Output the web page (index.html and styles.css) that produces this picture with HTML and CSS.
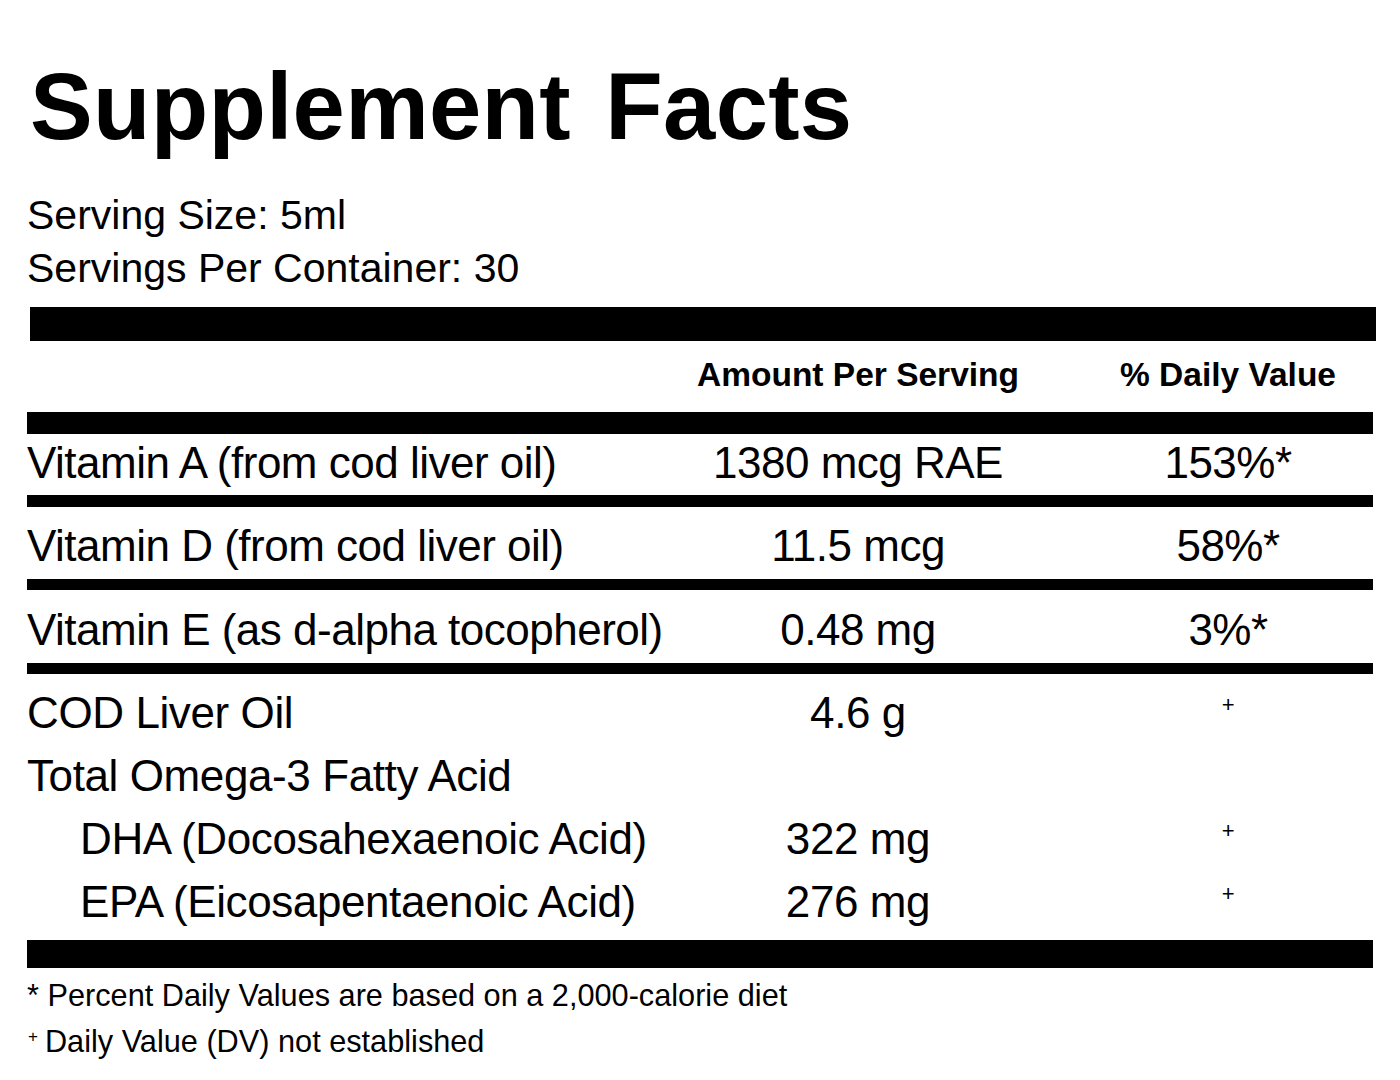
FILE: index.html
```html
<!DOCTYPE html>
<html lang="en">
<head>
<meta charset="utf-8">
<title>Supplement Facts</title>
<link rel="stylesheet" href="styles.css">
</head>
<body>
<main class="label">
  <h1 class="title">Supplement Facts</h1>
  <div class="serving">
    <div>Serving Size: 5ml</div>
    <div>Servings Per Container: 30</div>
  </div>
  <div class="bar bar-top"></div>
  <div class="row head">
    <span class="name"></span>
    <span class="amt">Amount Per Serving</span>
    <span class="dv">% Daily Value</span>
  </div>
  <div class="bar bar-med"></div>
  <div class="row vit vit-a">
    <span class="name">Vitamin A (from cod liver oil)</span>
    <span class="amt">1380 mcg RAE</span>
    <span class="dv">153%*</span>
  </div>
  <div class="bar bar-thin bar-12"></div>
  <div class="row vit vit-d">
    <span class="name">Vitamin D (from cod liver oil)</span>
    <span class="amt">11.5 mcg</span>
    <span class="dv">58%*</span>
  </div>
  <div class="bar bar-thin"></div>
  <div class="row vit vit-e">
    <span class="name">Vitamin E (as d-alpha tocopherol)</span>
    <span class="amt">0.48 mg</span>
    <span class="dv">3%*</span>
  </div>
  <div class="bar bar-thin"></div>
  <div class="group">
    <div class="row line">
      <span class="name">COD Liver Oil</span>
      <span class="amt">4.6 g</span>
      <span class="dv"><span class="plus">+</span></span>
    </div>
    <div class="row line">
      <span class="name">Total Omega-3 Fatty Acid</span>
      <span class="amt"></span>
      <span class="dv"></span>
    </div>
    <div class="row line">
      <span class="name sub">DHA (Docosahexaenoic Acid)</span>
      <span class="amt">322 mg</span>
      <span class="dv"><span class="plus">+</span></span>
    </div>
    <div class="row line">
      <span class="name sub">EPA (Eicosapentaenoic Acid)</span>
      <span class="amt">276 mg</span>
      <span class="dv"><span class="plus">+</span></span>
    </div>
  </div>
  <div class="bar bar-bottom"></div>
  <div class="notes">
    <p>* Percent Daily Values are based on a 2,000-calorie diet</p>
    <p><span class="note-plus">+</span>Daily Value (DV) not established</p>
  </div>
</main>
</body>
</html>
```
FILE: styles.css
```css
html, body {
  margin: 0;
  padding: 0;
  background: #ffffff;
}

body {
  font-family: "Liberation Sans", Arial, Helvetica, sans-serif;
  color: #000;
}

.label {
  width: 1346px;
  padding: 60px 0 0 27px;
}

.title {
  margin: 0;
  font-size: 94px;
  line-height: 94px;
  font-weight: 700;
  letter-spacing: 0.3px;
  word-spacing: 8px;
  padding-left: 3px;
}

.serving {
  margin-top: 35px;
  font-size: 41px;
  line-height: 53px;
}

.bar {
  background: #000;
}

.bar-top {
  margin-top: 12px;
  height: 34px;
  margin-left: 3px;
  margin-right: -3px;
}

.bar-med {
  height: 22px;
}

.bar-thin {
  height: 11px;
}

.bar-12 {
  height: 12px;
}

.bar-bottom {
  height: 28px;
}

.row {
  display: grid;
  grid-template-columns: 606px 450px 290px;
}

.row .name {
  white-space: nowrap;
}

.row .amt,
.row .dv {
  text-align: center;
  white-space: nowrap;
}

.head {
  height: 71px;
  align-items: center;
  font-size: 33.5px;
  font-weight: 700;
  padding-bottom: 4px;
  box-sizing: border-box;
}

.vit {
  align-items: end;
  font-size: 44px;
  line-height: 50px;
  letter-spacing: -0.5px;
  padding-bottom: 7px;
  box-sizing: border-box;
}

.vit-a { height: 61px; }
.vit-d { height: 72px; padding-bottom: 8px; }
.vit-e { height: 73px; padding-bottom: 8px; }

.group {
  padding: 7px 0 7px;
}

.line {
  font-size: 44px;
  line-height: 63px;
  letter-spacing: -0.4px;
}

.name.sub {
  padding-left: 53px;
}

.plus {
  font-size: 22px;
  line-height: 0;
  vertical-align: 16px;
}

.notes {
  margin-top: 5px;
  font-size: 30.7px;
  line-height: 46px;
}

.notes p {
  margin: 0;
}

.note-plus {
  font-size: 17px;
  line-height: 0;
  vertical-align: 10px;
  margin-left: 1px;
  margin-right: 7px;
}
```
